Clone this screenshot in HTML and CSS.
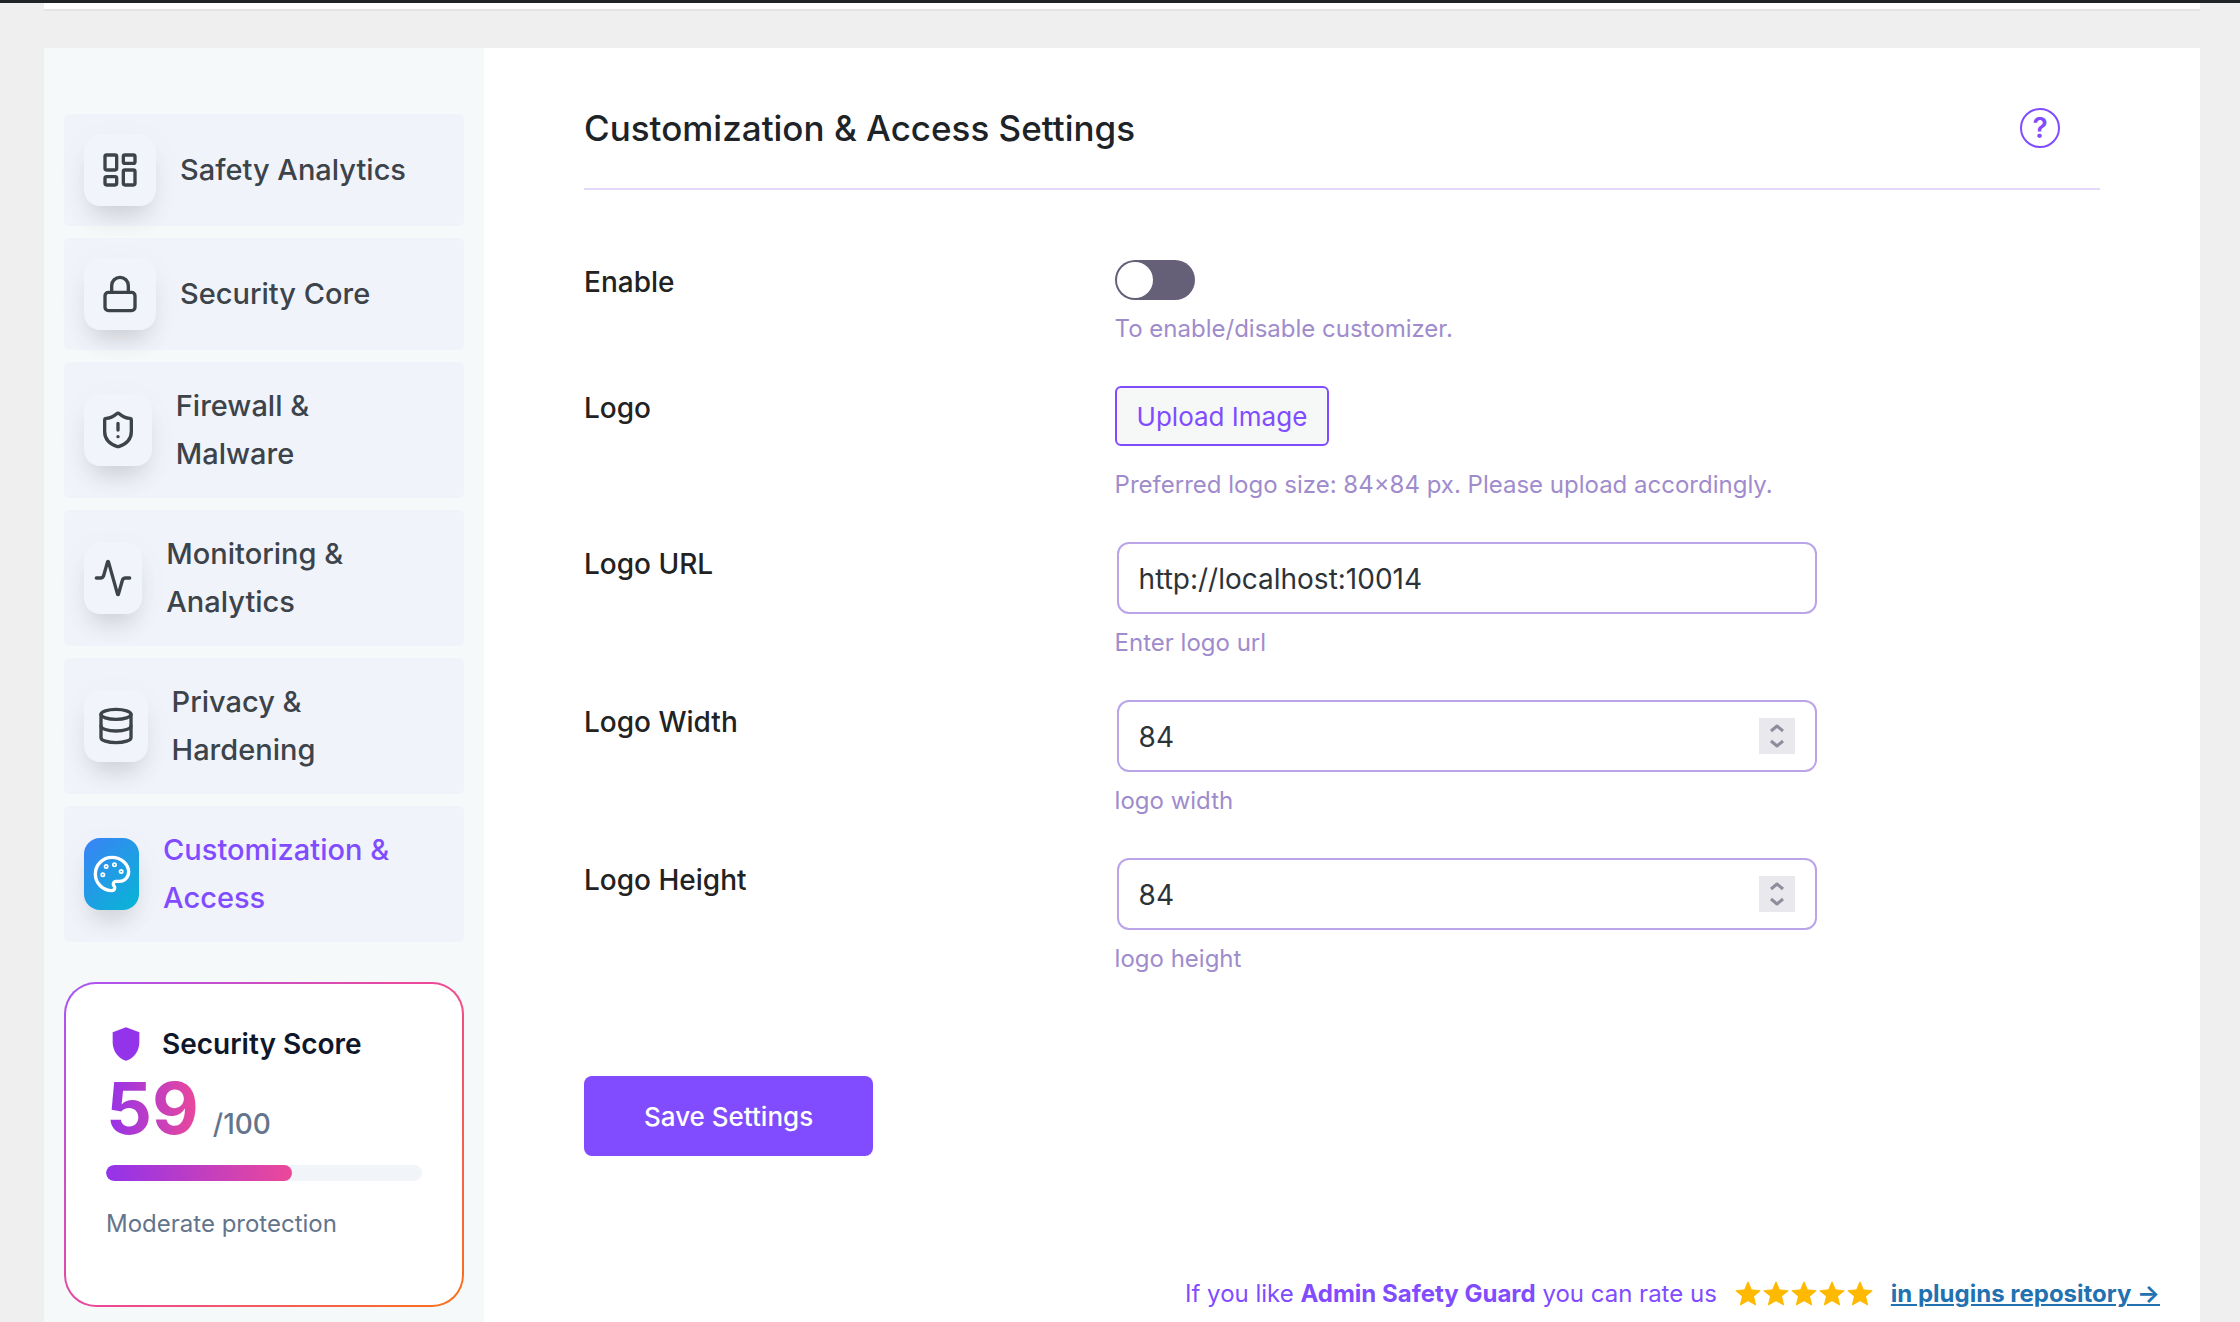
FILE: index.html
```html
<!DOCTYPE html>
<html lang="en">
<head>
    <meta charset="UTF-8">
    <meta name="viewport" content="width=device-width, initial-scale=1.0">
    <title>Customization &amp; Access Settings</title>
    <link rel="stylesheet" href="styles.css">
</head>
<body>
    <div class="admin-bar"></div>

    <div class="wrap">
        <div class="notice-strip"></div>

        <div class="panel">
            <aside class="sidebar">
                <nav class="menu">
                    <a class="menu-item" href="#analytics">
                        <span class="menu-icon">
                            <svg class="icon" viewBox="0 0 24 24"><rect x="3" y="3" width="7" height="9" rx="1"/><rect x="14" y="3" width="7" height="5" rx="1"/><rect x="14" y="12" width="7" height="9" rx="1"/><rect x="3" y="16" width="7" height="5" rx="1"/></svg>
                        </span>
                        <span class="menu-text">Safety Analytics</span>
                    </a>
                    <a class="menu-item" href="#core">
                        <span class="menu-icon">
                            <svg class="icon" viewBox="0 0 24 24"><rect x="3" y="11" width="18" height="11" rx="2"/><path d="M7 11V7a5 5 0 0 1 10 0v4"/></svg>
                        </span>
                        <span class="menu-text">Security Core</span>
                    </a>
                    <a class="menu-item" href="#firewall">
                        <span class="menu-icon">
                            <svg class="icon" viewBox="0 0 24 24"><path d="M20 13c0 5-3.500 7.500-7.660 8.950a1 1 0 0 1-.670-.010C7.500 20.500 4 18 4 13V6a1 1 0 0 1 1-1c2 0 4.500-1.200 6.240-2.720a1.170 1.170 0 0 1 1.520 0C14.510 3.810 17 5 19 5a1 1 0 0 1 1 1z"/><path d="M12 8v4M12 16h.010"/></svg>
                        </span>
                        <span class="menu-text">Firewall &amp; Malware</span>
                    </a>
                    <a class="menu-item" href="#monitoring">
                        <span class="menu-icon">
                            <svg class="icon" viewBox="0 0 24 24"><path d="M22 12h-2.480a2 2 0 0 0-1.930 1.460l-2.350 8.360a.25.25 0 0 1-.480 0L9.240 2.180a.25.25 0 0 0-.480 0l-2.350 8.360A2 2 0 0 1 4.490 12H2"/></svg>
                        </span>
                        <span class="menu-text">Monitoring &amp; Analytics</span>
                    </a>
                    <a class="menu-item" href="#privacy">
                        <span class="menu-icon">
                            <svg class="icon" viewBox="0 0 24 24"><ellipse cx="12" cy="5" rx="9" ry="3"/><path d="M3 5v14a9 3 0 0 0 18 0V5"/><path d="M3 12a9 3 0 0 0 18 0"/></svg>
                        </span>
                        <span class="menu-text">Privacy &amp; Hardening</span>
                    </a>
                    <a class="menu-item active" href="#customization">
                        <span class="menu-icon">
                            <svg class="icon" viewBox="0 0 24 24"><circle cx="13.500" cy="6.500" r=".5"/><circle cx="17.500" cy="10.500" r=".5"/><circle cx="8.500" cy="7.500" r=".5"/><circle cx="6.500" cy="12.500" r=".5"/><path d="M12 2C6.500 2 2 6.500 2 12s4.500 10 10 10c.926 0 1.648-.746 1.648-1.688 0-.437-.180-.835-.437-1.125-.290-.289-.438-.652-.438-1.125a1.640 1.640 0 0 1 1.668-1.668h1.996c3.051 0 5.555-2.503 5.555-5.554C21.965 6.012 17.461 2 12 2z"/></svg>
                        </span>
                        <span class="menu-text">Customization &amp; Access</span>
                    </a>
                </nav>

                <section class="score-card">
                    <div class="score-head">
                        <svg class="score-shield" viewBox="0 0 24 24"><path d="M12 2 4 5v6.090c0 5.050 3.410 9.760 8 10.910 4.590-1.150 8-5.860 8-10.910V5z"/></svg>
                        <h3>Security Score</h3>
                    </div>
                    <div class="score-value">
                        <span class="score-number">59</span>
                        <span class="score-total">/100</span>
                    </div>
                    <div class="score-bar"><div class="score-fill" style="width: 59%"></div></div>
                    <p class="score-note">Moderate protection</p>
                </section>
            </aside>

            <main class="content">
                <form class="settings">
                    <header class="settings-header">
                        <h1>Customization &amp; Access Settings</h1>
                        <button type="button" class="help" aria-label="Help">?</button>
                    </header>

                    <div class="rows">
                        <div class="row">
                            <label class="row-label" for="enable">Enable</label>
                            <div class="field">
                                <input type="checkbox" class="toggle" id="enable">
                                <p class="hint">To enable/disable customizer.</p>
                            </div>
                        </div>
                        <div class="row">
                            <label class="row-label" for="logo">Logo</label>
                            <div class="field">
                                <button type="button" class="upload" id="logo">Upload Image</button>
                                <p class="hint hint-upload">Preferred logo size: 84×84 px. Please upload accordingly.</p>
                            </div>
                        </div>
                        <div class="row">
                            <label class="row-label" for="logo-url">Logo URL</label>
                            <div class="field">
                                <div class="input-box">
                                    <input type="text" id="logo-url" value="http://localhost:10014">
                                </div>
                                <p class="hint">Enter logo url</p>
                            </div>
                        </div>
                        <div class="row">
                            <label class="row-label" for="logo-width">Logo Width</label>
                            <div class="field">
                                <div class="input-box">
                                    <input type="number" id="logo-width" value="84">
                                    <svg class="spinner" viewBox="0 0 36 36"><path d="M12 13l6-5 6 5M12 23l6 5 6-5"/></svg>
                                </div>
                                <p class="hint">logo width</p>
                            </div>
                        </div>
                        <div class="row">
                            <label class="row-label" for="logo-height">Logo Height</label>
                            <div class="field">
                                <div class="input-box">
                                    <input type="number" id="logo-height" value="84">
                                    <svg class="spinner" viewBox="0 0 36 36"><path d="M12 13l6-5 6 5M12 23l6 5 6-5"/></svg>
                                </div>
                                <p class="hint">logo height</p>
                            </div>
                        </div>
                    </div>

                    <button type="submit" class="save">Save Settings</button>
                </form>

                <footer class="rate">
                    <span>If you like <strong>Admin Safety Guard</strong> you can rate us</span>
                    <span class="stars">
                        <svg viewBox="0 0 24 24"><path d="M12 1l3 7 8 1-6 5 2 8-7-4-7 4 2-8-6-5 8-1z"/></svg>
                        <svg viewBox="0 0 24 24"><path d="M12 1l3 7 8 1-6 5 2 8-7-4-7 4 2-8-6-5 8-1z"/></svg>
                        <svg viewBox="0 0 24 24"><path d="M12 1l3 7 8 1-6 5 2 8-7-4-7 4 2-8-6-5 8-1z"/></svg>
                        <svg viewBox="0 0 24 24"><path d="M12 1l3 7 8 1-6 5 2 8-7-4-7 4 2-8-6-5 8-1z"/></svg>
                        <svg viewBox="0 0 24 24"><path d="M12 1l3 7 8 1-6 5 2 8-7-4-7 4 2-8-6-5 8-1z"/></svg>
                    </span>
                    <a href="#reviews">in plugins repository →</a>
                </footer>
            </main>
        </div>
    </div>
</body>
</html>
```
FILE: styles.css
```css
* {
    box-sizing: border-box;
}
body {
    margin: 0;
    min-height: 100vh;
    display: flex;
    flex-direction: column;
    font-family: Inter, "Liberation Sans", sans-serif;
    font-size: 24px;
    color: #1d2327;
    background-color: #efefef;
}
h1, h3, p {
    margin: 0;
}
button, input {
    font-family: inherit;
}
.admin-bar {
    height: 3px;
    background-color: #1d2327;
}
.wrap {
    flex: 1;
    display: flex;
    flex-direction: column;
    padding: 0 40px 0 44px;
}
.notice-strip {
    height: 8px;
    margin-bottom: 37px;
    background-color: #fff;
    border-bottom: 2px solid #e4e4e4;
}
.panel {
    flex: 1;
    display: flex;
    background-color: #fff;
}

/* Sidebar */
.sidebar {
    flex: 0 0 440px;
    padding: 66px 20px 14px;
    background-color: #f5f9fa;
}
.menu {
    display: flex;
    flex-direction: column;
    gap: 12px;
}
.menu-item {
    display: flex;
    align-items: center;
    gap: 24px;
    padding: 20px;
    border-radius: 6px;
    background-color: #f0f3f9;
    color: #3c434a;
    font-size: 29px;
    font-weight: 500;
    line-height: 48px;
    text-decoration: none;
}
.menu-icon {
    display: flex;
    align-items: center;
    justify-content: center;
    width: 72px;
    height: 72px;
    border-radius: 16px;
    background-color: #f1f4fa;
    box-shadow: 0 8px 40px rgba(0, 0, 0, 0.03), 0 16px 24px -8px rgba(0, 0, 0, 0.14);
}
.menu-text {
    margin-right: 24px;
}
.icon {
    flex: none;
    width: 40px;
    height: 40px;
    fill: none;
    stroke: currentColor;
    stroke-width: 2;
    stroke-linecap: round;
    stroke-linejoin: round;
}
.active {
    color: #814cff;
}
.active .menu-icon {
    color: #fff;
    background: linear-gradient(135deg, #3b82f6, #06b6d4);
}

/* Security score */
.score-card {
    margin-top: 40px;
    padding: 40px 40px 62px;
    border: 2px solid transparent;
    border-radius: 32px;
    background: linear-gradient(#fff, #fff) padding-box, linear-gradient(135deg, #a855f7, #ec4899, #f97316) border-box;
}
.score-head {
    display: flex;
    align-items: center;
    gap: 16px;
}
.score-head h3 {
    font-size: 28px;
    font-weight: 600;
    line-height: 40px;
    color: #0f172a;
}
.score-shield {
    width: 40px;
    height: 40px;
    fill: #9333ea;
}
.score-value {
    display: flex;
    align-items: baseline;
    gap: 14px;
    margin-top: 8px;
    line-height: 72px;
}
.score-number {
    font-size: 72px;
    font-weight: 700;
    color: transparent;
    background: linear-gradient(90deg, #9333ea, #ec4899);
    -webkit-background-clip: text;
    background-clip: text;
}
.score-total {
    font-size: 28px;
    font-weight: 500;
    line-height: 28px;
    color: #64748b;
}
.score-bar {
    height: 16px;
    margin-top: 21px;
    border-radius: 8px;
    background-color: #f1f5f9;
    overflow: hidden;
}
.score-fill {
    height: 100%;
    border-radius: 8px;
    background: linear-gradient(90deg, #9333ea, #ec4899);
}
.score-note {
    margin-top: 24px;
    font-size: 24px;
    line-height: 38px;
    color: #64748b;
}

/* Settings form */
.content {
    flex: 1;
    display: flex;
    flex-direction: column;
    justify-content: space-between;
}
.settings {
    padding: 60px 100px 0;
}
.settings-header {
    display: flex;
    align-items: center;
    justify-content: space-between;
    padding: 0 40px 40px 0;
    border-bottom: 2px solid #e4d9fb;
}
.settings-header h1 {
    font-size: 35px;
    font-weight: 500;
    line-height: 40px;
}
.help {
    width: 40px;
    height: 40px;
    padding: 0;
    border: 2px solid #814cff;
    border-radius: 50%;
    background: none;
    color: #814cff;
    font-size: 28px;
    font-weight: 600;
    line-height: 36px;
}
.rows {
    display: flex;
    flex-direction: column;
    gap: 38px;
    padding-top: 70px;
}
.row {
    display: grid;
    grid-template-columns: 35% 1fr;
}
.row-label {
    font-size: 28px;
    font-weight: 500;
    line-height: 44px;
    color: #222;
}
.toggle {
    appearance: none;
    display: flex;
    align-items: center;
    width: 80px;
    height: 40px;
    margin: 0;
    padding: 2px;
    border-radius: 20px;
    background-color: #665f78;
}
.toggle::before {
    content: "";
    width: 36px;
    height: 36px;
    border-radius: 50%;
    background-color: #fff;
}
.toggle:checked {
    justify-content: flex-end;
    background-color: #814cff;
}
.hint {
    margin-top: 10px;
    font-size: 24px;
    line-height: 38px;
    color: #a08ccc;
}
.hint-upload {
    margin-top: 20px;
}
.upload {
    display: block;
    height: 60px;
    padding: 0 20px;
    border: 2px solid #814cff;
    border-radius: 6px;
    background-color: #f6f7f7;
    color: #814cff;
    font-size: 26px;
}
.input-box {
    position: relative;
    max-width: 704px;
    padding: 0 2px;
}
.input-box input {
    display: block;
    width: 100%;
    height: 72px;
    padding: 2px 20px 0;
    border: 2px solid #b9a5e8;
    border-radius: 12px;
    background-color: #fff;
    color: #2c3338;
    font-size: 28px;
}
.input-box input[type="number"] {
    appearance: textfield;
}
.input-box input::-webkit-inner-spin-button {
    appearance: none;
}
.spinner {
    position: absolute;
    top: 18px;
    right: 24px;
    width: 36px;
    height: 36px;
    background-color: #e9e8ed;
    fill: none;
    stroke: #8f8c9d;
    stroke-width: 3;
    stroke-linejoin: round;
    pointer-events: none;
}
.save {
    height: 80px;
    margin-top: 98px;
    padding: 0 60px;
    border: none;
    border-radius: 8px;
    background-color: #814cff;
    color: #fff;
    font-size: 26px;
    font-weight: 500;
}

/* Rating line */
.rate {
    display: flex;
    align-items: center;
    justify-content: flex-end;
    gap: 18px;
    padding: 0 40px 10px;
    font-size: 24px;
    line-height: 36px;
    color: #814cff;
}
.stars {
    display: flex;
    gap: 2px;
}
.stars svg {
    width: 26px;
    height: 26px;
    fill: #ffb900;
    stroke: #ffb900;
    stroke-width: 1;
    stroke-linejoin: round;
}
.rate a {
    color: #2271b1;
    font-weight: 700;
}
```
